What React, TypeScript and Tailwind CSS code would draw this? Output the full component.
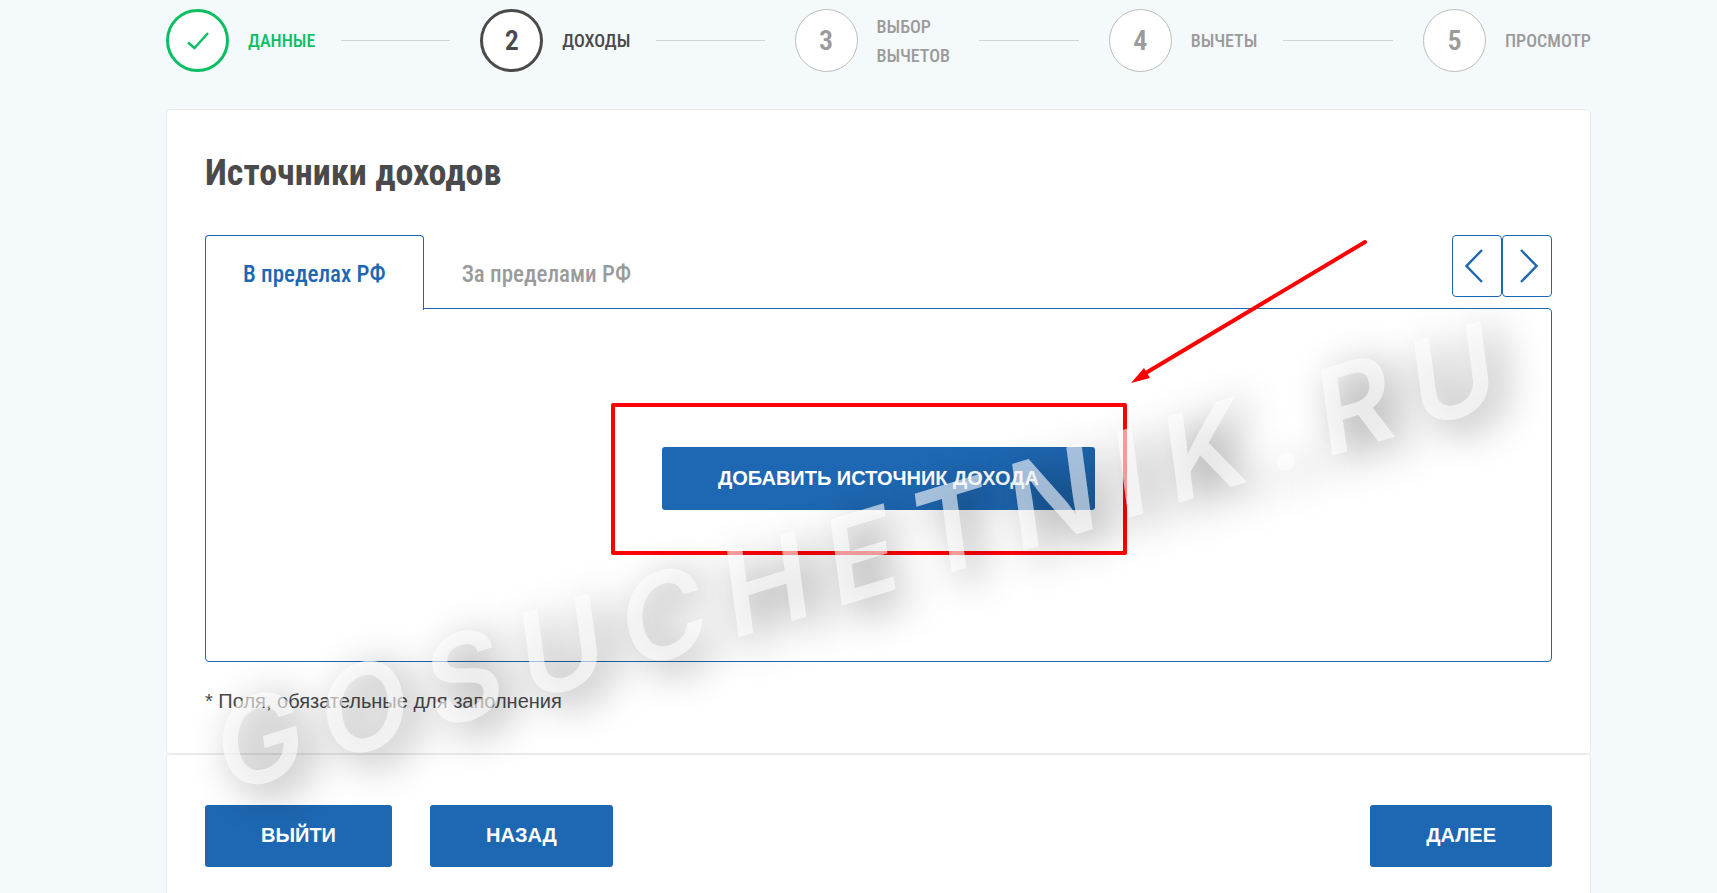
import { useState } from 'react';

type Step = {
  label: string;
  state: 'done' | 'current' | 'next';
};

const steps: Step[] = [
  { label: 'Данные', state: 'done' },
  { label: 'Доходы', state: 'current' },
  { label: 'Выбор вычетов', state: 'next' },
  { label: 'Вычеты', state: 'next' },
  { label: 'Просмотр', state: 'next' },
];

const circleStyles = {
  done: 'border-3 border-[#0abf62] text-[#0abf62]',
  current: 'border-3 border-[#4a4a4a] text-[#4a4a4a]',
  next: 'border border-[#bdbdbd] text-[#9b9b9b]',
};

const labelStyles = {
  done: 'text-[#0abf62]',
  current: 'text-[#4a4a4a]',
  next: 'text-[#9b9b9b]',
};

const tabs = ['В пределах РФ', 'За пределами РФ'];

const buttonClass =
  'rounded-[3px] bg-[#1e67b2] pb-0.5 text-xl font-bold text-white uppercase hover:bg-[#185694]';

const Stepper = () => (
  <ol className="flex h-[63px] items-center font-['Roboto_Condensed','Liberation_Sans_Narrow',Roboto,sans-serif]">
    {steps.map((step, index) => {
      const isLast = index === steps.length - 1;

      return (
        <li key={step.label} className={`flex items-center ${isLast ? 'w-42' : 'flex-1'}`}>
          <span
            className={`flex size-[63px] shrink-0 items-center justify-center rounded-full bg-white text-[28px] font-semibold ${circleStyles[step.state]}`}
          >
            {step.state === 'done' ? (
              <svg viewBox="0 0 22 18" className="h-[18px] w-[22px]" fill="none" aria-hidden="true">
                <path d="M1 10.5 L7.5 16 L21 1" stroke="currentColor" strokeWidth="2.4" />
              </svg>
            ) : (
              index + 1
            )}
          </span>
          <span
            className={`ml-[19px] max-w-19 text-[18px] leading-[29px] font-medium uppercase ${labelStyles[step.state]}`}
          >
            {step.label}
          </span>
          {!isLast && <span className="mr-[30px] ml-[26px] h-px min-w-4 flex-1 bg-[#d3d6d8]" />}
        </li>
      );
    })}
  </ol>
);

const Arrow = () => (
  <svg
    viewBox="0 0 238 146"
    className="pointer-events-none absolute -top-[208px] left-[468px] h-[146px] w-[238px]"
    fill="none"
    aria-hidden="true"
  >
    <path d="M235 3 L14 135" stroke="#ff0000" strokeWidth="4" strokeLinecap="round" />
    <path d="M1 144 L14 129 L20 139 Z" fill="#ff0000" />
  </svg>
);

const App = () => {
  const [activeTab, setActiveTab] = useState(0);

  return (
    <div className="relative flex min-h-screen flex-col overflow-hidden bg-[#f4f9fc] pt-[9px] pr-[126px] pl-[166px] font-['Liberation_Sans',Arial,sans-serif] text-[#4a4a4a]">
      <Stepper />

      <main className="mt-[37px] rounded-[4px] border border-[#ebebeb] bg-white px-[38px] pb-[37px]">
        <h1 className="mt-9 font-['Roboto_Condensed','Liberation_Sans_Narrow',Roboto,sans-serif] text-4xl leading-[54px] font-bold">
          Источники доходов
        </h1>

        <div className="mt-[35px] flex items-start justify-between">
          <div role="tablist" className="flex">
            {tabs.map((tab, index) => (
              <button
                key={tab}
                type="button"
                role="tab"
                aria-selected={activeTab === index}
                onClick={() => setActiveTab(index)}
                className={`relative -mb-px h-[75px] rounded-t-[4px] border border-b-0 px-[37px] pt-1 font-['Roboto_Condensed','Liberation_Sans_Narrow',Roboto,sans-serif] text-[23px] font-medium ${
                  activeTab === index
                    ? 'border-[#1e67b2] bg-white text-[#1e67b2]'
                    : 'border-transparent text-[#9b9b9b]'
                }`}
              >
                {tab}
              </button>
            ))}
          </div>

          <div className="flex">
            <button
              type="button"
              aria-label="Предыдущая вкладка"
              onClick={() => setActiveTab(0)}
              className="flex h-[62px] w-[50px] items-center justify-center rounded-[4px] border border-[#1e67b2] text-[#1e67b2]"
            >
              <svg viewBox="0 0 18 34" className="mr-1.5 h-[34px] w-[18px]" fill="none">
                <path d="M17 1 L1.5 17 L17 33" stroke="currentColor" strokeWidth="2.4" />
              </svg>
            </button>
            <button
              type="button"
              aria-label="Следующая вкладка"
              onClick={() => setActiveTab(1)}
              className="flex h-[62px] w-[50px] items-center justify-center rounded-[4px] border border-[#1e67b2] text-[#1e67b2]"
            >
              <svg viewBox="0 0 18 34" className="ml-1 h-[34px] w-[18px]" fill="none">
                <path d="M1 1 L16.5 17 L1 33" stroke="currentColor" strokeWidth="2.4" />
              </svg>
            </button>
          </div>
        </div>

        <section className="-mt-px flex h-[354px] items-start justify-center rounded-[4px] rounded-tl-none border border-[#1e67b2] pt-[138px]">
          <div className="relative">
            <button type="button" className={`h-[63px] px-14 ${buttonClass}`}>
              Добавить источник дохода
            </button>
            <span className="pointer-events-none absolute -top-[44px] -right-[32px] -bottom-[45px] -left-[51px] rounded-[2px] border-4 border-[#ff0000]" />
            <Arrow />
          </div>
        </section>

        <p className="mt-6 text-xl leading-[30px]">* Поля, обязательные для заполнения</p>
      </main>

      <footer className="flex flex-1 items-start rounded-t-[4px] border border-b-0 border-[#ebebeb] bg-white px-[38px] pt-[50px] pb-[26px]">
        <button type="button" className={`h-[62px] px-14 ${buttonClass}`}>
          Выйти
        </button>
        <button type="button" className={`ml-[38px] h-[62px] px-14 ${buttonClass}`}>
          Назад
        </button>
        <button type="button" className={`ml-auto h-[62px] px-14 ${buttonClass}`}>
          Далее
        </button>
      </footer>

      <div className="pointer-events-none absolute top-[554px] left-[864px] -translate-x-1/2 -translate-y-1/2 -rotate-17 font-['Inter','Open_Sans',sans-serif] text-[118px] leading-none font-semibold tracking-[0.17em] whitespace-nowrap text-white/60 italic select-none text-shadow-[10px_12px_40px_rgba(0,0,0,0.42)]">
        GOSUCHETNIK.RU
      </div>
    </div>
  );
};

export default App;
